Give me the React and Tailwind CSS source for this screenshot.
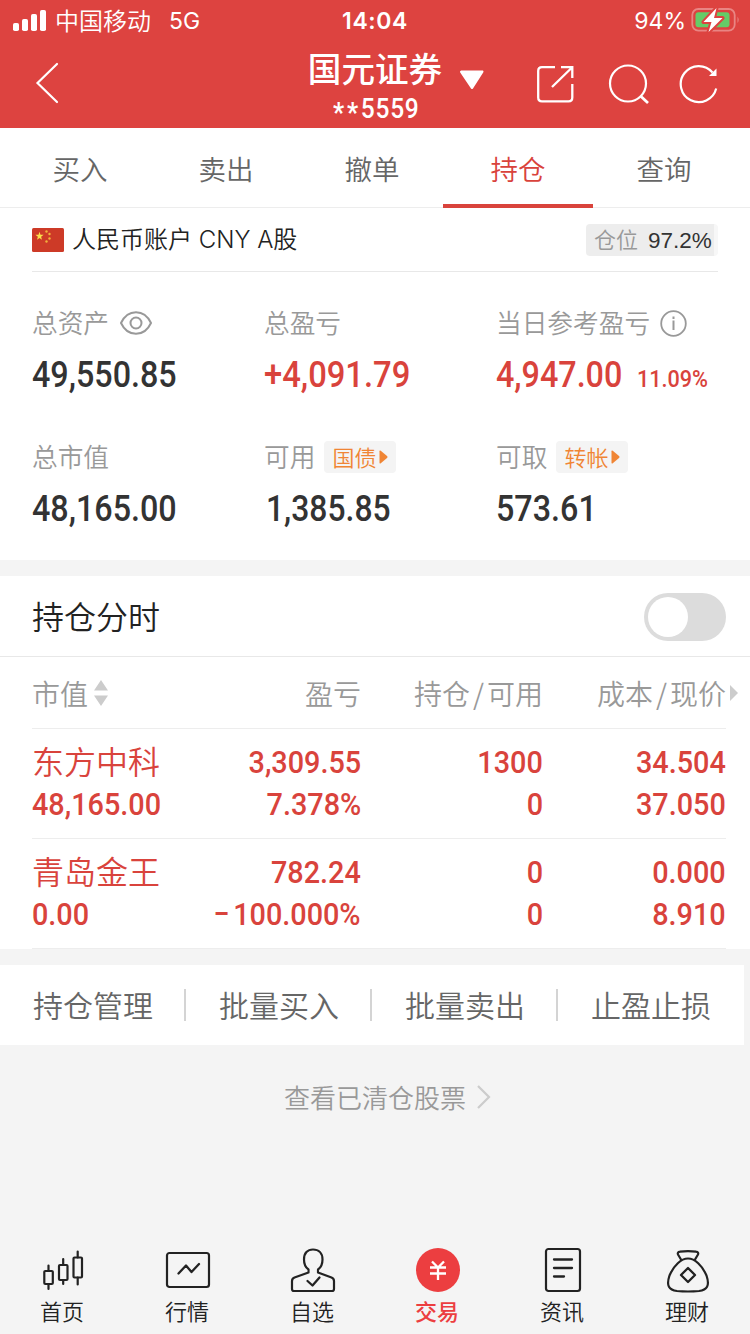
import clsx from "clsx";

const cjk = "font-['Inter','Noto_Sans_CJK_SC',sans-serif]";
const cjkOnly = "font-['Noto_Sans_CJK_SC',sans-serif]";

function Num({ children, right, className }) {
  return (
    <span
      className={clsx(
        "inline-block whitespace-nowrap font-['Roboto',sans-serif] font-medium",
        right ? "origin-right" : "origin-left",
        className
      )}
    >
      {children}
    </span>
  );
}

function StatusBar() {
  return (
    <div className="flex h-10 items-center text-white">
      <div className="flex w-[300px] items-center pl-[13px]">
        <svg width="33" height="21" viewBox="0 0 33 21" fill="#fff">
          <rect x="0" y="13" width="6" height="8" rx="1.8" />
          <rect x="9" y="9" width="6" height="12" rx="1.8" />
          <rect x="18" y="4" width="6" height="17" rx="1.8" />
          <rect x="27" y="0" width="6" height="21" rx="1.8" />
        </svg>
        <span className={clsx("ml-[9px] text-[24px] leading-10 font-[350]", cjkOnly)}>中国移动</span>
        <span className="mt-[2px] ml-[18px] text-[23px] leading-10 font-['Inter',sans-serif]">5G</span>
      </div>
      <div className="mt-[2px] w-[150px] text-center font-['Inter',sans-serif] text-[23px] leading-10 font-semibold tracking-[0.6px]">
        14:04
      </div>
      <div className="flex w-[300px] items-center justify-end pr-[10px]">
        <span className="mt-[2px] font-['Inter',sans-serif] text-[23px] leading-10">94%</span>
        <svg className="ml-[5px]" width="49" height="26" viewBox="0 0 49 26">
          <rect x="1.3" y="2" width="42.4" height="21.6" rx="6" fill="none" stroke="#e98583" strokeWidth="1.8" />
          <path d="M46.5 9.5q2.4 3.3 0 6.6z" fill="#e98583" />
          <rect x="4.5" y="5.3" width="34" height="15" rx="3" fill="#65cc67" />
          <path d="M25.500 1 12.500 15h8L17.500 25 31.500 11h-8.500z" fill="#fff" stroke="#dd4340" strokeWidth="4" strokeLinejoin="round" />
          <path d="M25.500 1 12.500 15h8L17.500 25 31.500 11h-8.500z" fill="#fff" />
        </svg>
      </div>
    </div>
  );
}

function TitleBar() {
  return (
    <div className="flex h-[88px] text-white">
      <div className="w-[300px] pt-[22px] pl-[35px]">
        <svg width="26" height="42" viewBox="0 0 26 42" fill="none" stroke="#fff" strokeWidth="2.200" strokeLinecap="round">
          <path d="M22 2 2.500 21 22 40" />
        </svg>
      </div>
      <div className="w-[150px]">
        <div className={clsx("mt-[8px] mb-[2px] text-center text-[33.600px] leading-[40px] font-medium whitespace-nowrap", cjkOnly)}>国元证券</div>
        <div className="flex h-[38px] items-center justify-center">
          <Num className="ml-[11px] origin-center scale-x-[.91] text-[27px] leading-[38px] tracking-[0.8px]">
            <span className="relative top-[4px] font-bold tracking-[3px]">**</span>5559
          </Num>
        </div>
      </div>
      <div className="flex">
        <svg className="mt-[29px] ml-[9px]" width="26" height="22" viewBox="0 0 26 22" fill="#fff">
          <path d="M2 1.500h22q1 .8.200 2L14 19.500q-1 1-2 0L1.200 3.500q-.8-1.200.800-2z" />
        </svg>
        <svg className="mt-[24px] ml-[50px]" width="40" height="40" viewBox="0 0 40 40" fill="none" stroke="#fff" strokeWidth="2.300">
          <path d="M20 3.200H7q-3.800 0-3.800 3.800v26.500q0 3.800 3.800 3.800h26.500q3.800 0 3.800-3.800V20" />
          <path d="M26 3.200h11.300V14M37 3.500 17 23" />
        </svg>
        <svg className="mt-[23px] ml-[33px]" width="42" height="42" viewBox="0 0 42 42" fill="none" stroke="#fff" strokeWidth="2.200">
          <circle cx="20" cy="20.500" r="18" />
          <path d="m32.500 33 7.500 7" strokeWidth="2.800" />
        </svg>
        <svg className="mt-[23px] ml-[28px]" width="42" height="42" viewBox="0 0 42 42" fill="none" stroke="#fff" strokeWidth="2.200">
          <path d="M38.200 25.500a18 18 0 1 1-3.700-16" />
          <path d="M38.500 5.500v7.500H31z" fill="#fff" stroke="none" />
        </svg>
      </div>
    </div>
  );
}

function Tabs() {
  const tabs = ["买入", "卖出", "撤单", "持仓", "查询"];
  return (
    <div className={clsx("flex h-20 justify-center border-b border-[#ededed] bg-white pr-[6px] text-[27.500px] leading-[80px] font-[350] text-[#666]", cjkOnly)}>
      {tabs.map((t) => (
        <div key={t} className={clsx("flex w-[146px] shrink-0 flex-col items-center", t === "持仓" && "text-[#d9433c]")}>
          <div className="h-[76px] shrink-0">{t}</div>
          {t === "持仓" && <div className="h-1 w-[150px] shrink-0 bg-[#d9433c]" />}
        </div>
      ))}
    </div>
  );
}

function Flag() {
  return (
    <svg width="32" height="24" viewBox="0 0 32 24">
      <rect width="32" height="24" rx="1.500" fill="#cd3a27" />
      <path d="m7.500 3.800 1 2.900 3.100.1-2.500 1.900.9 3-2.500-1.800-2.500 1.800.9-3-2.500-1.900 3.100-.1z" fill="#fbe04b" />
      <g fill="#f1b03c">
        <circle cx="14.500" cy="3.500" r="1.200" />
        <circle cx="17.500" cy="6" r="1.200" />
        <circle cx="17.500" cy="10.500" r="1.200" />
        <circle cx="14.500" cy="13.500" r="1.200" />
      </g>
    </svg>
  );
}

function Chip({ children }) {
  return (
    <span className="ml-[9px] flex h-8 w-[72px] items-center rounded bg-[#f4f4f4] pl-2 text-[22px] text-[#f08534]">
      <span className="h-8 leading-[30px] font-[350]">{children}</span>
      <svg className="ml-[3px]" width="9" height="14" viewBox="0 0 9 14" fill="#f08534">
        <path d="M.5 1.200q0-1.400 1.300-.4L8 6q1 1 0 2L1.800 13.200q-1.300 1-1.300-.4z" />
      </svg>
    </span>
  );
}

function Stat({ label, extra, value, red, pct, className, scale = "scale-x-[.897]" }) {
  return (
    <div className={className}>
      <div className={clsx("flex h-8 items-center text-[25.700px] font-[350] whitespace-nowrap text-[#999]", cjkOnly)}>
        <span className="h-8 leading-[30px]">{label}</span>
        {extra}
      </div>
      <div className={clsx("mt-[16px] flex h-[40px] items-baseline", red ? "text-[#d9433c]" : "text-[#333]")}>
        <Num className={clsx(scale, "text-[36px] leading-[40px]")}>{value}</Num>
        {pct && <Num className="scale-x-[.9] text-[24px] leading-[40px]">{pct}</Num>}
      </div>
    </div>
  );
}

function Account() {
  return (
    <div className="h-[352px] bg-white px-8">
      <div className={clsx("flex h-16 items-center border-b border-[#e8e8e8]", cjk)}>
        <Flag />
        <span className="ml-2 flex-1 pt-px text-[24px] font-[350] text-[#222]">人民币账户 CNY A股</span>
        <span className="flex h-8 w-[132px] items-center rounded border-r-4 border-[#f7f7f7] bg-[#ededed] pl-2 font-['Liberation_Sans','Noto_Sans_CJK_SC',sans-serif] text-[22px] font-[350] whitespace-nowrap text-[#999]">
          <span className="pt-[2px]">仓位</span>
          <span className="mt-[2px] ml-[10px] text-[22.500px] text-[#333]">97.2%</span>
        </span>
      </div>
      <div className="grid grid-cols-[232px_232px_222px] pt-[35px]">
        <Stat
          label="总资产"
          value="49,550.85"
          extra={
            <svg className="ml-[11px]" width="32" height="24" viewBox="0 0 32 24" fill="none" stroke="#999" strokeWidth="2">
              <path d="M1 12C4.500 4.500 9.500 1.200 16 1.200S27.500 4.500 31 12c-3.500 7.500-8.500 10.800-15 10.800S4.500 19.500 1 12z" />
              <circle cx="16" cy="12" r="5.500" />
            </svg>
          }
        />
        <Stat label="总盈亏" value="+4,091.79" red scale="scale-x-[.91]" />
        <Stat
          label="当日参考盈亏"
          value="4,947.00"
          red
          pct="11.09%"
          extra={
            <svg className="ml-[10px]" width="27" height="27" viewBox="0 0 27 27" fill="none" stroke="#999" strokeWidth="1.800">
              <circle cx="13.500" cy="13.500" r="12.300" />
              <path d="M13.500 10.500v9.500M13.500 6.500v2.500" strokeWidth="2" />
            </svg>
          }
        />
        <Stat className="mt-[46px]" label="总市值" value="48,165.00" />
        <Stat className="mt-[46px]" label="可用" value="1,385.85" scale="ml-[2px] scale-x-[.885]" extra={<Chip>国债</Chip>} />
        <Stat className="mt-[46px]" label="可取" value="573.61" extra={<Chip>转帐</Chip>} />
      </div>
    </div>
  );
}

const cols = "grid grid-cols-[147px_182px_182px_183px]";

function Holding({ cells }) {
  return (
    <div className={clsx(cols, "h-[110px] border-b border-[#ededed] pt-[12px] text-[#d9433c]")}>
      {cells.map(([a, b], i) => (
        <div key={i} className={clsx("flex flex-col text-[32px] leading-[42px]", i > 0 ? "items-end" : "items-start")}>
          {i === 0 ? (
            <span className={clsx("-mt-[2px] mb-[2px] font-[350] whitespace-nowrap", cjkOnly)}>{a}</span>
          ) : (
            <Num right className="scale-x-[.9]">{a}</Num>
          )}
          <Num right={i > 0} className="scale-x-[.9]">
            {b.startsWith("−") ? <><span className="tracking-[4px]">−</span>{b.slice(1)}</> : b}
          </Num>
        </div>
      ))}
    </div>
  );
}

function Holdings() {
  return (
    <div className="mt-4 bg-white">
      <div className="flex h-[81px] items-center justify-between border-b border-[#e8e8e8] pr-6 pl-8">
        <span className={clsx("-mt-[2px] text-[32px] font-[350] text-[#222]", cjkOnly)}>持仓分时</span>
        <div className="mt-[2px] flex h-12 w-[82px] items-center rounded-full bg-[#dcdcdc] pl-1">
          <div className="size-10 rounded-full bg-white" />
        </div>
      </div>
      <div className="pl-8">
        <div className={clsx("w-[694px]", cjkOnly)}>
          <div className={clsx(cols, "h-[72px] border-b border-[#ededed] text-[28px] leading-[72px] font-[350] text-[#999]")}>
            <div className="flex items-center">
              市值
              <svg className="ml-[6px]" width="14" height="26" viewBox="0 0 14 26" fill="#ccc">
                <path d="M7 0l7 10.500H0zM7 26l7-10.500H0z" />
              </svg>
            </div>
            <div className="text-right">盈亏</div>
            <div className="text-right whitespace-nowrap">持仓<span className="mx-[3px]">/</span>可用</div>
            <div className="flex items-center justify-end whitespace-nowrap">
              成本<span className="mx-[3px]">/</span>现价
              <svg className="-mr-3 ml-[4px]" width="8" height="16" viewBox="0 0 8 16" fill="#ccc">
                <path d="M0 0l8 8-8 8z" />
              </svg>
            </div>
          </div>
          <Holding cells={[["东方中科", "48,165.00"], ["3,309.55", "7.378%"], ["1300", "0"], ["34.504", "37.050"]]} />
          <Holding cells={[["青岛金王", "0.00"], ["782.24", "−100.000%"], ["0", "0"], ["0.000", "8.910"]]} />
        </div>
      </div>
    </div>
  );
}

function Actions() {
  const items = ["持仓管理", "批量买入", "批量卖出", "止盈止损"];
  return (
    <div className={clsx("mt-4 flex h-20 w-[744px] items-center bg-white text-[30px] font-[350] text-[#666]", cjkOnly)}>
      {items.map((t, i) => (
        <div key={t} className={clsx("flex h-8 w-[186px] items-center justify-center", i < 3 && "border-r-2 border-[#d4d4d4] pl-[2px]")}>
          <span className="-mt-[2px]">{t}</span>
        </div>
      ))}
    </div>
  );
}

const line = { fill: "none", stroke: "#222", strokeWidth: 2.2, strokeLinejoin: "round", strokeLinecap: "round" };

const nav = [
  ["首页", <g {...line}>
    <rect x="3.300" y="23" width="8.500" height="13" rx="1" /><path d="M7.500 17.500V23M7.500 36v5" />
    <rect x="18" y="17" width="8.500" height="15" rx="1" /><path d="M22.200 11v6M22.200 32v4" />
    <rect x="32.500" y="9.500" width="8.500" height="20" rx="1" /><path d="M36.700 3.500v6M36.700 29.500v7" />
  </g>],
  ["行情", <g {...line}>
    <rect x="1" y="5" width="42" height="34" rx="2.500" /><path d="m12.500 25.500 7.500-8 5.500 6.500 7.500-8" strokeWidth="2.300" />
  </g>],
  ["自选", <g {...line}>
    <path d="M17.500 24.500v-3C14.500 19.500 13 16 13 11.500 13 5 16.500 1.500 22 1.500S31.500 5 31.500 11.500c0 4.500-1.500 8-4.500 10v3l13.500 5q2.500 1 2.500 3.500V41q0 2-2 2H3q-2 0-2-2v-8q0-2.500 2.500-3.500z" />
    <path d="m16.500 33 5 4.500 7-8" strokeWidth="2.300" />
  </g>],
  ["交易", <g>
    <circle cx="22" cy="22" r="22" fill="#ec3e40" />
    <path d="m16 13.500 6 6 6-6M14 19.500h16M14 25.500h16M22 19v13" fill="none" stroke="#fff" strokeWidth="2.300" />
  </g>],
  ["资讯", <g {...line}>
    <rect x="5" y="1" width="34" height="42" rx="2.500" /><path d="M13 11.500h18M13 20h18M13 28.500h10" strokeWidth="2.300" />
  </g>],
  ["理财", <g {...line}>
    <path d="M15 11.500 12 6.500q-1-2.500 2-2.800 8-1.200 16 0 3 .3 2 2.800l-3 5" />
    <path d="M22 10.500c7 0 14 7 18.500 17C44 38 41 42 33 43q-11 1-22 0C3 42 0 38 3.500 27.500 8 17.500 15 10.500 22 10.500z" />
    <path d="m22 20 7 7-7 7-7-7z" strokeWidth="2.300" />
  </g>],
];

function BottomNav() {
  return (
    <div className={clsx("grid grid-cols-6 pb-[8px] text-[22px] text-[#222]", cjkOnly)}>
      {nav.map(([label, icon]) => (
        <div key={label} className="flex w-[124px] flex-col items-center">
          <svg className="ml-px" width="44" height="44" viewBox="0 0 44 44" overflow="visible">{icon}</svg>
          <span className={clsx("mt-[2px] leading-8", label === "交易" ? "font-medium text-[#ec3e40]" : "font-[350]")}>{label}</span>
        </div>
      ))}
    </div>
  );
}

export default function App() {
  return (
    <div className="flex h-[1334px] w-[750px] flex-col overflow-hidden bg-[#f4f4f4]">
      <header className="h-32 shrink-0 bg-[#dd4340]">
        <StatusBar />
        <TitleBar />
      </header>
      <Tabs />
      <Account />
      <Holdings />
      <Actions />
      <div className={clsx("mt-[32px] flex h-10 items-center pl-[284px] text-[26px] leading-10 font-[350] text-[#999]", cjkOnly)}>
        查看已清仓股票
        <svg className="ml-[11px]" width="14" height="24" viewBox="0 0 14 24" fill="none" stroke="#ccc" strokeWidth="2.200">
          <path d="m1 1 11 11L1 23" />
        </svg>
      </div>
      <div className="flex-1" />
      <BottomNav />
    </div>
  );
}
